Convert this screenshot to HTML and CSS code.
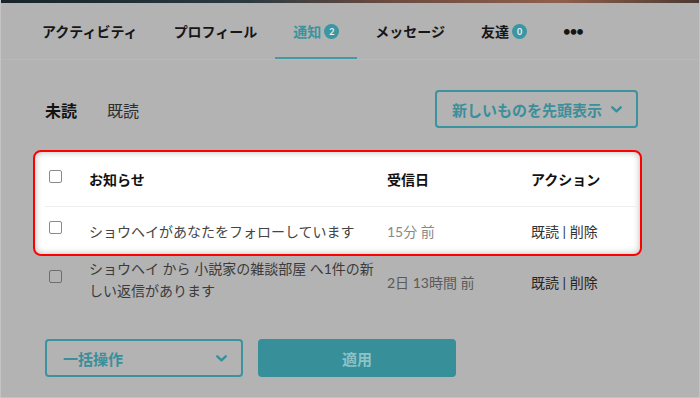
FILE: index.html
```html
<!DOCTYPE html>
<html lang="ja">
<head>
<meta charset="utf-8">
<link rel="stylesheet" href="styles.css">
</head>
<body>
<div class="page">
  <div class="hero-strip"></div>
  <nav class="tabs">
    <span class="tab">アクティビティ</span>
    <span class="tab">プロフィール</span>
    <span class="tab active">通知<span class="badge">2</span></span>
    <span class="tab">メッセージ</span>
    <span class="tab">友達<span class="badge">0</span></span>
    <span class="tab more">•••</span>
  </nav>
  <main class="content">
    <div class="filter-row">
      <div class="subtabs">
        <span class="subtab current">未読</span>
        <span class="subtab">既読</span>
      </div>
      <div class="sort-btn">
        <span>新しいものを先頭表示</span>
        <svg class="chev" width="11" height="7" viewBox="0 0 11 7"><polyline points="1.3,1.3 5.5,5.3 9.7,1.3" fill="none" stroke="currentColor" stroke-width="2.4" stroke-linecap="round" stroke-linejoin="round"/></svg>
      </div>
    </div>

    <div class="highlight">
      <div class="row head">
        <span class="cb"></span>
        <span class="c-text">お知らせ</span>
        <span class="c-date">受信日</span>
        <span class="c-act">アクション</span>
      </div>
      <div class="row body first">
        <span class="cb"></span>
        <span class="c-text">ショウヘイがあなたをフォローしています</span>
        <span class="c-date">15分 前</span>
        <span class="c-act">既読 | 削除</span>
      </div>
    </div>

    <div class="row body dim">
      <span class="cb"></span>
      <span class="c-text">ショウヘイ から 小説家の雑談部屋 へ1件の新しい返信があります</span>
      <span class="c-date">2日 13時間 前</span>
      <span class="c-act">既読 | 削除</span>
    </div>

    <div class="bulk-row">
      <div class="select">
        <span>一括操作</span>
        <svg class="chev" width="11" height="7" viewBox="0 0 11 7"><polyline points="1.3,1.3 5.5,5.3 9.7,1.3" fill="none" stroke="currentColor" stroke-width="2.4" stroke-linecap="round" stroke-linejoin="round"/></svg>
      </div>
      <div class="apply">適用</div>
    </div>
  </main>
</div>
</body>
</html>
```

FILE: styles.css
```css
* { box-sizing: border-box; }
html, body {
  margin: 0;
  padding: 0;
  background: #b3b3b3;
}
body {
  font-family: Lato, "Noto Sans CJK JP", sans-serif;
  color: #1a1a1a;
  width: 700px;
  height: 398px;
  overflow: hidden;
}
.page {
  width: 700px;
  height: 398px;
  border-left: 1px solid #c4c4c4;
  border-right: 1px solid #c4c4c4;
  border-bottom: 1px solid #c4c4c4;
  background: #b3b3b3;
}
.hero-strip {
  height: 3px;
  background: linear-gradient(90deg, #17242a 0%, #2a3a40 35%, #6a4a40 55%, #8f5f4c 80%, #4a3a32 100%);
}
.tabs {
  display: flex;
  align-items: stretch;
  height: 57px;
  padding-left: 23px;
  border-bottom: 1px solid #b8b8b8;
}
.tab {
  display: flex;
  align-items: center;
  padding: 0 18px;
  font-size: 14px;
  font-weight: 700;
  color: #161616;
  border-bottom: 2px solid transparent;
  padding-top: 2px;
}
.tab.active {
  color: #3a939e;
  border-bottom-color: #3f9ba6;
}
.tab.more {
  font-size: 13px;
  letter-spacing: -1px;
  padding-left: 18px;
}
.badge {
  display: inline-flex;
  align-items: center;
  justify-content: center;
  width: 15px;
  height: 15px;
  border-radius: 50%;
  background: #3a96a2;
  color: #e8f2f3;
  font-size: 9px;
  font-weight: 700;
  margin-left: 3px;
  font-family: Lato, sans-serif;
}
.content {
  padding: 30px 61px 0 44px;
}
.filter-row {
  display: flex;
  justify-content: space-between;
  align-items: center;
  height: 38px;
}
.subtabs {
  display: flex;
  gap: 30px;
  font-size: 16px;
  padding-top: 1px;
}
.subtab { color: #2e2e2e; }
.subtab.current { font-weight: 700; color: #121212; }
.sort-btn {
  display: flex;
  align-items: center;
  justify-content: space-between;
  width: 203px;
  height: 38px;
  border: 2px solid #3a939e;
  border-radius: 4px;
  padding: 0 14px 0 15px;
  color: #3a8f9a;
  font-size: 15px;
  font-weight: 700;
}
.chev { color: #3a8f9a; display: block; }
.highlight {
  margin: 22px -4px 0 -12px;
  border: 2px solid #ff0000;
  border-radius: 8px;
  background: #ffffff;
  box-shadow: inset 0 0 7px rgba(0, 0, 0, 0.28);
  padding: 0 1px 0 10px;
}
.row {
  display: grid;
  grid-template-columns: 44px 298px 144px 1fr;
  align-items: center;
  font-size: 14px;
}
.row.head {
  height: 54px;
  font-weight: 700;
  color: #111;
}
.row.body.first {
  height: 48px;
  border-top: 1px solid #eeeeee;
  color: #444;
}
.cb {
  width: 13px;
  height: 13px;
  margin-left: 4px;
  margin-bottom: 6px;
  border: 1.5px solid #8a8a8a;
  border-radius: 2px;
  background: #fff;
}
.c-date { color: #888; }
.row.head .c-date { color: #111; }
.c-act { color: #333; }
.row.head .c-act { color: #111; }
.row.dim {
  padding-top: 2px;
  color: #3b3b3b;
}
.row.dim .c-text {
  line-height: 22px;
  padding-right: 6px;
}
.row.dim .cb {
  background: #b3b3b3;
  border-color: #6e6e6e;
  margin-bottom: 8px;
}
.row.dim .c-date { color: #5a5a5a; padding-top: 4px; }
.row.dim .c-act { color: #262626; padding-top: 4px; }
.bulk-row {
  display: flex;
  gap: 15px;
  margin-top: 37px;
}
.select {
  display: flex;
  align-items: center;
  justify-content: space-between;
  width: 198px;
  height: 38px;
  border: 2px solid #3a939e;
  border-radius: 4px;
  padding: 0 14px 0 16px;
  color: #3a8f9a;
  font-size: 15px;
  font-weight: 700;
}
.apply {
  display: flex;
  align-items: center;
  justify-content: center;
  width: 198px;
  height: 38px;
  border-radius: 4px;
  background: #368f99;
  color: #8dc2c7;
  font-size: 15px;
  font-weight: 700;
}
```
